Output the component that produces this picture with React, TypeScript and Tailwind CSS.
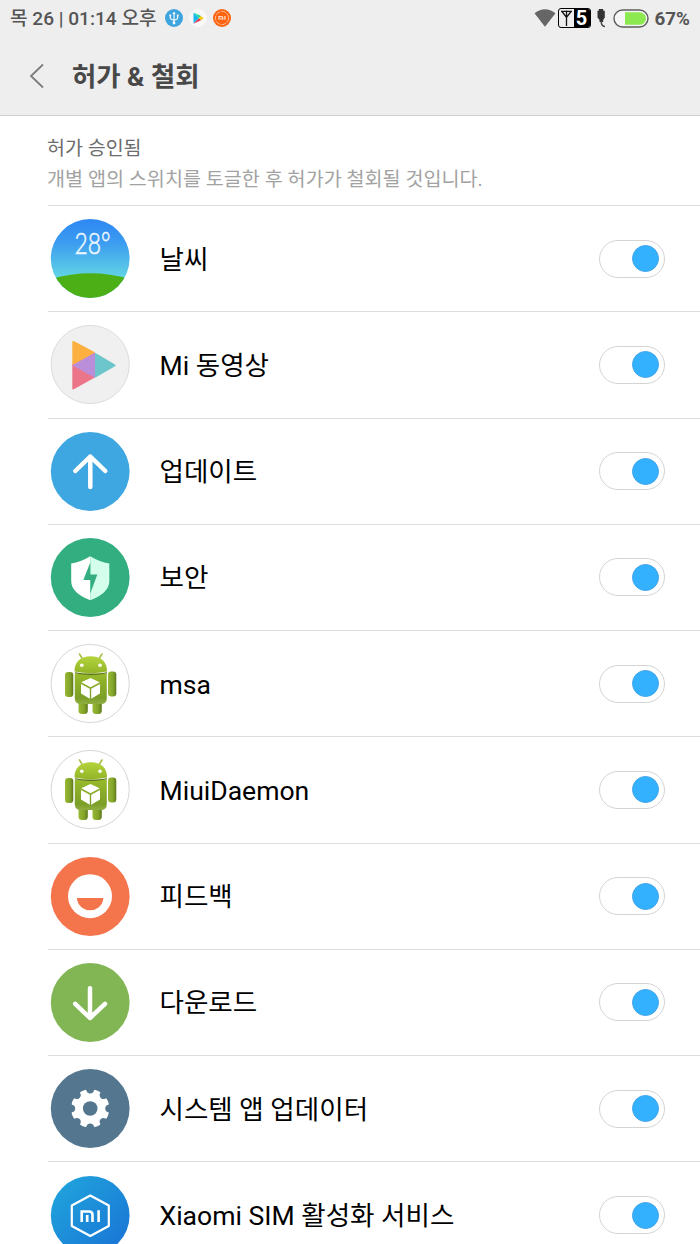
import type { ReactNode } from 'react';

type AppRow = { name: string; icon: ReactNode };

const apps: AppRow[] = [
  { name: '날씨', icon: <WeatherIcon /> },
  { name: 'Mi 동영상', icon: <VideoIcon /> },
  { name: '업데이트', icon: <UpdateIcon /> },
  { name: '보안', icon: <SecurityIcon /> },
  { name: 'msa', icon: <AndroidIcon /> },
  { name: 'MiuiDaemon', icon: <AndroidIcon /> },
  { name: '피드백', icon: <FeedbackIcon /> },
  { name: '다운로드', icon: <DownloadIcon /> },
  { name: '시스템 앱 업데이터', icon: <GearIcon /> },
  { name: 'Xiaomi SIM 활성화 서비스', icon: <SimIcon /> },
];

export default function App() {
  return (
    <div className="h-[1244px] w-[700px] overflow-hidden bg-white font-['Roboto','Noto_Sans_CJK_KR',sans-serif] text-black">
      <header className="h-[116px] border-b border-[#cfcfcf] bg-[#eeeeee]">
        <StatusBar />
        <div className="flex h-20 items-center pl-[29px]">
          <svg width="16" height="26" viewBox="0 0 16 26" fill="none" stroke="#7c7c7c" strokeWidth="1.8">
            <path d="M14 1.5 2 13l12 11.5" />
          </svg>
          <h1 className="ml-[27px] pt-px text-[26.4px] leading-10 font-bold whitespace-nowrap text-[#484848]">허가 &amp; 철회</h1>
        </div>
      </header>

      <section className="ml-12">
        <div className="-ml-px h-[89px] pt-[17px]">
          <h2 className="text-[19.5px] leading-[31px] text-[#6c6c6c]">허가 승인됨</h2>
          <p className="text-[19.6px] leading-[31px] whitespace-nowrap text-[#a2a2a2]">
            개별 앱의 스위치를 토글한 후 허가가 철회될 것입니다.
          </p>
        </div>
        <ul>
          {apps.map((app) => (
            <li key={app.name} className="flex h-[106.27px] items-center border-t border-[#dedede] pr-[35px] pl-[3px]">
              <span className="h-[79px] w-[79px] shrink-0">{app.icon}</span>
              <span className="ml-[29.5px] flex-1 pt-[2px] text-[26.55px] leading-10 whitespace-nowrap">{app.name}</span>
              <Toggle />
            </li>
          ))}
        </ul>
      </section>
    </div>
  );
}

function StatusBar() {
  return (
    <div className="flex h-9 items-center justify-between pr-2.5 pl-2.5 text-[#555555]">
      <div className="flex items-center">
        <span className="pt-px text-[19.1px] leading-6 font-medium whitespace-nowrap">목 26 | 01:14 오후</span>
        <svg className="ml-2" width="18" height="18" viewBox="0 0 18 18">
          <circle cx="9" cy="9" r="9" fill="#3da4dd" />
          <g fill="none" stroke="#fff" strokeWidth="1.1">
            <path d="M9 4v10M5.3 6.2v2.6q0 1.8 3.7 2.4 3.7-.6 3.7-2.4V6.2" />
          </g>
          <path d="m9 2.5 1.6 2.4H7.4z" fill="#fff" />
          <circle cx="9" cy="14" r="1.4" fill="#fff" />
          <path d="M4.4 5.5h1.8v1.8H4.4zM11.8 5.5h1.8v1.8h-1.8z" fill="#fff" />
        </svg>
        <svg className="ml-1.5" width="18" height="18" viewBox="0 0 18 18">
          <circle cx="9" cy="9" r="9" fill="#f8f8f8" />
          <path d="M4.5 3.8v10.8l5.4-5.4z" fill="#18b8ee" />
          <path d="m4.5 3.5 7.6 3.5-2.2 2.2z" fill="#20d9a0" />
          <path d="m4.5 14.8 7.6-3.6-2.2-2z" fill="#e93458" />
          <path d="m11.8 7 2.8 2.2-2.8 2-2-2z" fill="#fbc70b" />
        </svg>
        <svg className="ml-1.5" width="18" height="18" viewBox="0 0 18 18">
          <circle cx="9" cy="9" r="9" fill="#fc6410" />
          <circle cx="9" cy="9" r="6.6" fill="none" stroke="#ffd0b0" strokeWidth=".8" strokeDasharray="5 1" />
          <path d="M6 10.8V7.5h2.5q1.3 0 1.3 1.1v2.2M8 8.8v2M11.9 7.1v3.7" fill="none" stroke="#ffe5d5" strokeWidth="1.2" />
        </svg>
      </div>

      <div className="flex items-center">
        <svg width="22" height="18" viewBox="0 0 22 18">
          <path d="M.5 4.2Q11-3.6 21.500 4.200L11 17.700z" fill="#666" />
        </svg>
        <span className="ml-[2px] flex h-5 w-[33px] rounded-[3px] border border-black bg-[#eeeeee]">
          <svg width="15" height="18" viewBox="0 0 15 18">
            <path d="M7.5 17V1.5M2 2.3h11M3 2.5l4.5 6L12 2.5" fill="none" stroke="#111" strokeWidth="1.3" />
          </svg>
          <span className="h-[18px] flex-1 rounded-r-[2px] bg-black text-center text-xl leading-[18px] font-bold text-white">5</span>
        </span>
        {/* charger plug */}
        <svg className="ml-[5px]" width="10" height="21" viewBox="0 0 10 21">
          <path d="M2.8 1h4.400v1.700h1.600v6.800L7.200 12v2H3.500v-2L1.500 9.500V2.700h1.300z" fill="#333" />
          <path d="M5.300 13v1.500q.2 3.500 3.700 4" fill="none" stroke="#444" strokeWidth="1.500" />
        </svg>
        <svg className="ml-[7px]" width="36" height="19" viewBox="0 0 36 19">
          <rect x="1" y="1" width="34" height="17" rx="8.5" fill="#f6f6f6" stroke="#5d5d5d" strokeWidth="1.4" />
          <path d="M12 3.200h14.700a6.300 6.300 0 0 1 0 12.600H12z" fill="#8de950" />
        </svg>
        <span className="ml-[6px] pt-px text-[18.8px] leading-6 font-bold">67%</span>
      </div>
    </div>
  );
}

function Toggle() {
  return (
    <span className="flex h-[38px] w-[66px] shrink-0 items-center justify-end rounded-full border border-[#d4d4d4] bg-white pr-[5px]">
      <span className="h-[27px] w-[27px] rounded-full border border-[#40a4e8] bg-[#33b1ff]" />
    </span>
  );
}

/* Round 79px launcher icon */
function Disc({ fill, stroke, children }: { fill: string; stroke?: string; children: ReactNode }) {
  return (
    <svg width="79" height="79" viewBox="0 0 79 79" overflow="visible">
      <circle cx="39.2" cy="39.5" r={stroke ? 39.1 : 39.4} fill={fill} stroke={stroke} />
      {children}
    </svg>
  );
}

function WeatherIcon() {
  return (
    <Disc fill="url(#sky)">
      <defs>
        <linearGradient id="sky" x1="0" y1="0" x2="0" y2="1">
          <stop offset="0" stopColor="#2e87f3" />
          <stop offset=".3" stopColor="#3c9cf0" />
          <stop offset=".75" stopColor="#62d5e5" />
        </linearGradient>
        <clipPath id="disc">
          <circle cx="39.2" cy="39.5" r="39.4" />
        </clipPath>
      </defs>
      <path d="M0 60Q39.5 48.5 79 60v19H0z" fill="#4daf16" clipPath="url(#disc)" />
      <text x="23.5" y="35" fontFamily="Lato" fontWeight="300" fontSize="29" textLength="36" lengthAdjust="spacingAndGlyphs" fill="#eaf6ff" stroke="#eaf6ff" strokeWidth=".6">
        28°
      </text>
    </Disc>
  );
}

function VideoIcon() {
  return (
    <Disc fill="#f0f0f0" stroke="#dcdcdc">
      <g strokeWidth="2" strokeLinejoin="round">
        <path d="M22.3 17v22.5L43 28z" fill="#fbb040" stroke="#fbb040" />
        <path d="M22.3 63.5V40L43 52z" fill="#ec7689" stroke="#ec7689" />
        <path d="M44.5 29v22.5l19-11.2z" fill="#6cc6cb" stroke="#6cc6cb" />
      </g>
      <path d="M21.3 40.3 44 27.5V53z" fill="#bb8ed9" />
    </Disc>
  );
}

function UpdateIcon() {
  return (
    <Disc fill="#3ea6e0">
      <path d="M39.3 55V24.5M24.3 39l15-14.500 15 14.500" fill="none" stroke="#fff" strokeWidth="4.5" strokeLinecap="round" strokeLinejoin="round" />
    </Disc>
  );
}

function DownloadIcon() {
  return (
    <Disc fill="#82b554">
      <path d="M39 25.2V55M24.2 40.8 39 55l15-14.2" fill="none" stroke="#fff" strokeWidth="4.5" strokeLinecap="round" strokeLinejoin="round" />
    </Disc>
  );
}

function SecurityIcon() {
  return (
    <Disc fill="#33ae80">
      <path d="M39.3 18.3Q30 24 20.2 25.5V43q0 12 19.1 19.3z" fill="#fff" />
      <path d="M39.3 18.3Q48.5 24 58.3 25.5V43q0 12-19 19.3z" fill="#d5ffed" />
      <path d="M39.3 24.5 32.3 42h7v13.5l7-19h-7z" fill="#33ae80" />
    </Disc>
  );
}

function AndroidIcon() {
  return (
    <Disc fill="#fff" stroke="#d2d7dc">
      <defs>
        <linearGradient id="droid-head" x1="0" y1="0" x2="0" y2="1">
          <stop offset="0" stopColor="#b5d43e" />
          <stop offset="1" stopColor="#92b426" />
        </linearGradient>
        <linearGradient id="droid-body" x1="0" y1="0" x2="0" y2="1">
          <stop offset="0" stopColor="#98ba2a" />
          <stop offset=".8" stopColor="#7b9e27" />
          <stop offset="1" stopColor="#8fae42" />
        </linearGradient>
        <linearGradient id="droid-limb" x1="0" y1="0" x2="1" y2="0">
          <stop offset="0" stopColor="#98b835" />
          <stop offset=".6" stopColor="#83a42a" />
          <stop offset="1" stopColor="#5d791d" />
        </linearGradient>
      </defs>
      <path d="m28.5 10 3 5M51 10l-3 5" stroke="#a5c046" strokeWidth="1.6" strokeLinecap="round" />
      <rect x="27.5" y="54" width="9.3" height="16" rx="3.5" fill="url(#droid-limb)" />
      <rect x="41.5" y="54" width="9.3" height="16" rx="3.5" fill="url(#droid-limb)" />
      <rect x="14" y="28" width="8.3" height="25" rx="3.2" fill="url(#droid-limb)" />
      <rect x="57" y="27.5" width="8.3" height="25" rx="3.2" fill="url(#droid-limb)" />
      <path d="M23.8 29.5h32V54q0 6-6 6h-20q-6 0-6-6z" fill="url(#droid-body)" />
      <path d="M23.5 27.5C23 18 30 12.2 39.8 12.2S56.5 18 56 27.5q-16 3.5-32.5 0z" fill="url(#droid-head)" />
      <path d="M24 28.8q16 3.2 32 0" fill="none" stroke="#536d19" strokeWidth="1.1" />
      <circle cx="30.8" cy="21.3" r="1.8" fill="#fff" />
      <circle cx="49" cy="21.3" r="1.8" fill="#fff" />
      <path d="m39.5 34 9.2 4.2-9.2 5-9.2-5zM30 40l8.8 4.7v10L30 49.5zM49 40l-8.8 4.7v10L49 49.5z" fill="#fff" />
    </Disc>
  );
}

function FeedbackIcon() {
  return (
    <Disc fill="#f4744c">
      <circle cx="39" cy="39.2" r="22" fill="#fff" />
      <path d="M26 41h26.3q0 1-.3 2.5a13 11.5 0 0 1-25.7 0Q26 42 26 41z" fill="#f4744c" />
    </Disc>
  );
}

function GearIcon() {
  const notches = [0, 45, 90, 135, 180, 225, 270, 315];
  return (
    <Disc fill="#54778f">
      <circle cx="39.2" cy="39.5" r="19.2" fill="#fff" />
      {notches.map((a) => (
        <path
          key={a}
          d="M33.8 19h10.8L43 21.5q-.8 3-3.800 3t-3.800-3z"
          fill="#54778f"
          transform={`rotate(${a} 39.2 39.5)`}
        />
      ))}
      <circle cx="39.2" cy="39.5" r="7.3" fill="#54778f" />
    </Disc>
  );
}

function SimIcon() {
  return (
    <Disc fill="url(#sim)">
      <defs>
        <linearGradient id="sim" x1="0" y1="0" x2="1" y2="1">
          <stop offset=".1" stopColor="#20a2dc" />
          <stop offset=".9" stopColor="#1976d5" />
        </linearGradient>
      </defs>
      <g fill="none" stroke="#fff" strokeLinejoin="round">
        <path d="m39.3 19.5 18.5 10V50l-18.5 10-18.5-10V29.5z" strokeWidth="2.2" />
        <path d="M30.7 46V35.5h7.500q3.300 0 3.300 3.200V46M36.200 39v7M47.600 34.300V46" strokeWidth="2.6" strokeLinejoin="miter" />
      </g>
    </Disc>
  );
}
